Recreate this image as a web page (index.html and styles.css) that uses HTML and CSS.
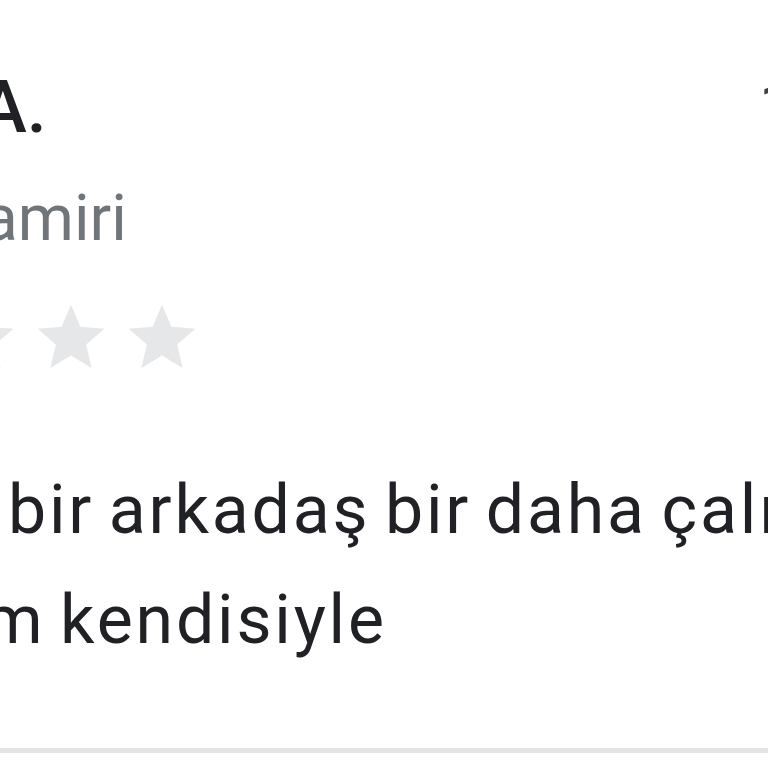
FILE: index.html
```html
<!DOCTYPE html>
<html lang="tr">
<head>
    <meta charset="UTF-8">
    <meta name="viewport" content="width=device-width, initial-scale=1.0">
    <title>Yorum</title>
    <link rel="stylesheet" href="styles.css">
</head>
<body>
    <div class="review">
        <div class="review-head">
            <div class="author">
                <div class="author-name">A.</div>
                <div class="author-category">amiri</div>
            </div>
            <div class="review-date">1</div>
        </div>

        <div class="stars">
            <svg class="star" viewBox="0 0 24 24"><path d="M12 17.27L18.18 21l-1.64-7.03L22 9.24l-7.19-.61L12 2 9.19 8.63 2 9.24l5.46 4.73L5.82 21z"/></svg>
            <svg class="star" viewBox="0 0 24 24"><path d="M12 17.27L18.18 21l-1.64-7.03L22 9.24l-7.19-.61L12 2 9.19 8.63 2 9.24l5.46 4.73L5.82 21z"/></svg>
            <svg class="star" viewBox="0 0 24 24"><path d="M12 17.27L18.18 21l-1.64-7.03L22 9.24l-7.19-.61L12 2 9.19 8.63 2 9.24l5.46 4.73L5.82 21z"/></svg>
        </div>

        <div class="review-text">
            <span class="line line-first">bir arkadaş bir daha çalışmam</span>
            <span class="line line-second">m kendisiyle</span>
        </div>
    </div>
</body>
</html>
```

FILE: styles.css
```css
html, body {
    overflow: hidden;
}
body {
    margin: 0;
    background-color: #fff;
    font-family: Roboto, "Noto Sans", sans-serif;
    color: #202124;
}
.review {
    width: 768px;
    padding-top: 63px;
    border-bottom: 5px solid #e4e4e4;
    padding-bottom: 73px;
}
.review-head {
    display: flex;
    justify-content: space-between;
    align-items: flex-start;
}
.author-name {
    font-size: 72px;
    line-height: 90px;
    font-weight: 500;
    margin-left: -21px;
    white-space: nowrap;
}
.author-category {
    font-size: 64px;
    line-height: 90px;
    color: #70757a;
    margin-top: 21px;
    margin-left: -17px;
    white-space: nowrap;
}
.review-date {
    font-size: 64px;
    line-height: 90px;
    color: #3c4043;
    margin-top: 0;
    margin-right: -27px;
}
.stars {
    display: flex;
    gap: 11px;
    margin-top: 34px;
    margin-left: -60px;
}
.star {
    display: block;
    width: 80px;
    height: 80px;
    fill: #e6e7e9;
}
.review-text {
    margin-top: 77px;
    font-size: 68px;
    line-height: 110px;
    letter-spacing: 2.8px;
    word-spacing: -5px;
}
.line {
    display: block;
    white-space: nowrap;
}
.line-first {
    margin-left: 8px;
}
.line-second {
    margin-left: -17px;
}
```
